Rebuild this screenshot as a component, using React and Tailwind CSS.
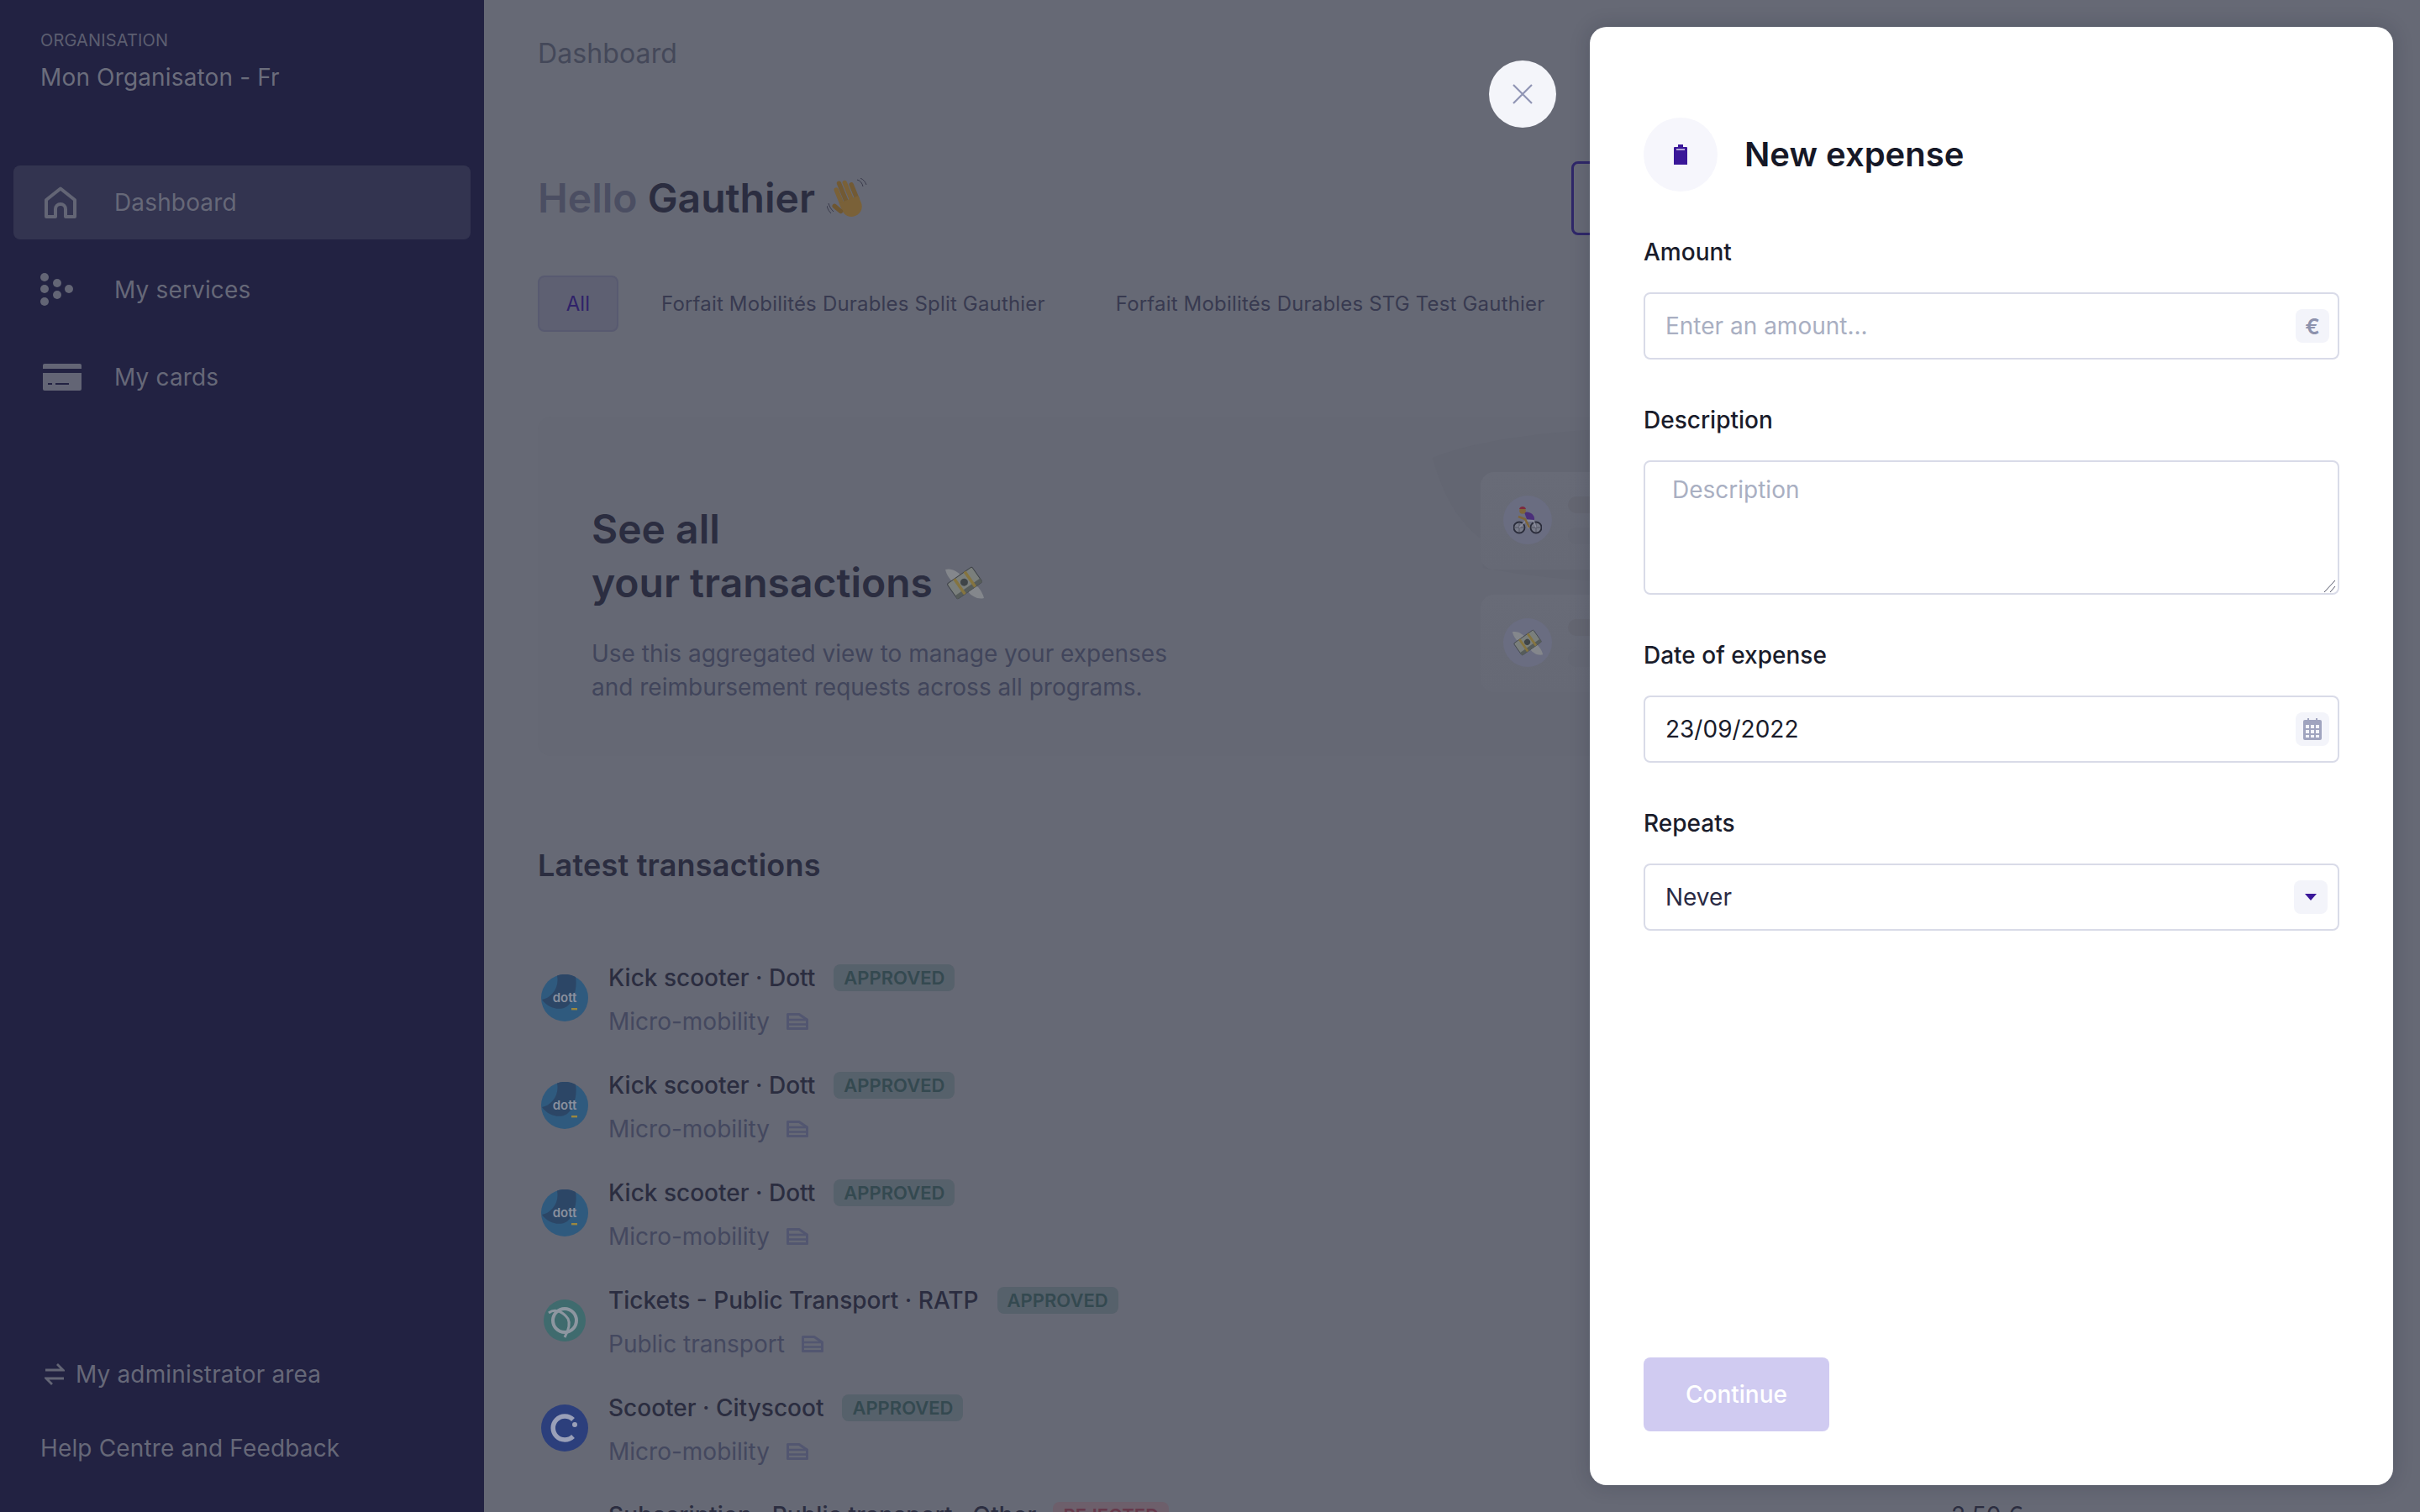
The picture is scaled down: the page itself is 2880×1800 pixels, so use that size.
import React from "react";

const Home = () => (
  <svg width="38" height="38" viewBox="0 0 38 38" fill="none" stroke="#636575" strokeWidth="4" strokeLinejoin="round">
    <path d="M19 2.5 L36 16 V36 H25 V27 a6 6 0 0 0 -12 0 V36 H2 V16 Z" />
  </svg>
);
const Dots = () => (
  <svg width="40" height="40" viewBox="0 0 40 40" fill="#636575">
    <circle cx="5" cy="5" r="5" /><circle cx="5" cy="19" r="5" /><circle cx="5" cy="34" r="5" />
    <circle cx="20" cy="12" r="5" /><circle cx="20" cy="26" r="5" /><circle cx="34" cy="19" r="5" />
  </svg>
);
const CardIcon = () => (
  <svg width="46" height="32" viewBox="0 0 46 32">
    <path d="M2 0 H44 a2 2 0 0 1 2 2 V6 H0 V2 a2 2 0 0 1 2 -2 Z" fill="#636575" />
    <path d="M0 11 H46 V30 a2 2 0 0 1 -2 2 H2 a2 2 0 0 1 -2 -2 Z" fill="#636575" />
    <rect x="6" y="23" width="5" height="2" fill="#222242" /><rect x="15" y="23" width="16" height="2" fill="#222242" />
  </svg>
);
const Swap = () => (
  <svg width="24" height="26" viewBox="0 0 24 26" fill="none" stroke="#636575" strokeWidth="2.8">
    <path d="M1 8 H21 M15 1 L22 8 L15 8" /><path d="M23 18 H3 M9 25 L2 18 L9 18" />
  </svg>
);
const Doc = () => (
  <svg width="26" height="20" viewBox="0 0 26 20" fill="none" stroke="#525670" strokeWidth="3" strokeLinejoin="round">
    <path d="M1.5 1.5 H15 L24.5 8 V18.5 H1.5 Z" /><path d="M1.5 8 H24.5 M1.5 13.5 H24.5" strokeWidth="2.4" />
  </svg>
);
const Wave = () => (
  <svg width="50" height="48" viewBox="0 0 50 48">
    <g transform="rotate(-22 25 26)">
      <rect x="14" y="7" width="5.4" height="26" rx="2.7" fill="#7a6138" />
      <rect x="20" y="1" width="5.4" height="30" rx="2.7" fill="#725a34" />
      <rect x="26.5" y="3" width="5.4" height="28" rx="2.7" fill="#7a6138" />
      <rect x="33" y="8" width="5.4" height="24" rx="2.7" fill="#725a34" />
      <path d="M14 26 H38.4 V35 C38.4 42 33 47 26 47 C19 47 14 41 14 35 Z" fill="#7a6138" />
      <rect x="7" y="24" width="5.4" height="15" rx="2.7" transform="rotate(-28 9 31)" fill="#6e5631" />
    </g>
    <path d="M36 2 C40 3 42 6 43 10 M40 0 C44 2 46 5 47 8 M2 30 C3 34 5 37 8 40 M0 33 C1 37 3 40 5 42" fill="none" stroke="#3a3b4c" strokeWidth="1" />
  </svg>
);
const Money = ({ size = 48 }) => (
  <svg width={size} height={size} viewBox="0 0 48 48">
    <path d="M1 8 C8 6 16 10 20 16 L14 26 C8 22 3 16 1 8 Z" fill="#84878c" />
    <path d="M47 42 C40 44 32 40 28 34 L34 24 C40 28 45 34 47 42 Z" fill="#84878c" />
    <g transform="rotate(-35 24 24)">
      <rect x="6" y="13" width="36" height="22" rx="2" fill="#7a7f7c" stroke="#3e4248" strokeWidth="1" />
      <rect x="6" y="30" width="36" height="5" fill="#565c5a" />
      <rect x="15" y="13" width="3.5" height="22" fill="#85743f" /><rect x="30" y="13" width="3.5" height="22" fill="#85743f" />
      <circle cx="24" cy="23" r="4.5" fill="#3f4548" />
    </g>
  </svg>
);
const Bike = () => (
  <svg width="34" height="34" viewBox="0 0 34 34" fill="none">
    <circle cx="7" cy="26" r="6.5" stroke="#2a2c3a" strokeWidth="1.8" fill="#777a88" />
    <circle cx="27" cy="26" r="6.5" stroke="#2a2c3a" strokeWidth="1.8" fill="#777a88" />
    <path d="M7 20 V32 M1 26 H13 M27 20 V32 M21 26 H33" stroke="#4a4c5a" strokeWidth="0.8" />
    <path d="M7 26 L15 18 L24 18 L27 26 M15 18 L18 27" stroke="#8d8f9f" strokeWidth="1.4" />
    <path d="M6 13 L14 16 L19 26" stroke="#7f6539" strokeWidth="2.6" />
    <path d="M13 8 C18 6 26 10 25 17 L16 16 Z" fill="#4b2f7a" />
    <circle cx="11" cy="6" r="3.8" fill="#7f6539" /><path d="M7 4 C8 0 14 0 15 4 Z" fill="#7d2a3e" />
  </svg>
);
const Dott = () => (
  <svg width="56" height="56" viewBox="0 0 56 56">
    <circle cx="28" cy="28" r="28" fill="#2f5a7e" />
    <path d="M19 1.5 A28 28 0 0 1 41 3 C43 14 40 30 31 38 C22 44 8 40 1 30 C12 28 22 16 19 1.5 Z" fill="#2c4666" />
    <text x="28" y="33" textAnchor="middle" fontSize="15" fontWeight="600" fill="#8a909e" fontFamily="Inter, sans-serif">dott</text>
    <rect x="36" y="40" width="7" height="2.4" fill="#9a8740" />
  </svg>
);
const Ratp = () => (
  <svg width="56" height="56" viewBox="0 0 56 56">
    <circle cx="28" cy="28" r="25" fill="#3f6b6e" />
    <circle cx="28" cy="28" r="14" fill="none" stroke="#8d96a0" strokeWidth="4" />
    <path d="M9 19 C18 12 28 20 32 26 C36 34 30 44 28 48" fill="none" stroke="#8d96a0" strokeWidth="3" />
  </svg>
);
const Cityscoot = () => (
  <svg width="56" height="56" viewBox="0 0 56 56">
    <circle cx="28" cy="28" r="28" fill="#2c3f7c" />
    <path d="M38 18 A14 14 0 1 0 38 38" fill="none" stroke="#9aa0b8" strokeWidth="5.5" />
    <circle cx="40" cy="24" r="3" fill="#9aa0b8" />
  </svg>
);
const Clipboard = () => (
  <svg width="18" height="24" viewBox="0 0 18 24" fill="#3a1799">
    <path d="M6 0 H12 V3 H16 a1 1 0 0 1 1 1 V24 H1 V4 a1 1 0 0 1 1 -1 H6 Z" />
    <path d="M4 6 H14" stroke="#ffffff" strokeWidth="1.2" />
  </svg>
);
const Calendar = () => (
  <svg width="22" height="26" viewBox="0 0 22 26" fill="#a0a4bf">
    <path d="M2 2 H5 V0 H7 V2 H15 V0 H17 V2 H20 a2 2 0 0 1 2 2 V24 a2 2 0 0 1 -2 2 H2 a2 2 0 0 1 -2 -2 V4 a2 2 0 0 1 2 -2 Z" />
    <g fill="#f3f4fa">
      <rect x="3" y="8" width="4" height="4" /><rect x="9" y="8" width="4" height="4" /><rect x="15" y="8" width="4" height="4" />
      <rect x="3" y="14" width="4" height="4" /><rect x="9" y="14" width="4" height="4" /><rect x="15" y="14" width="4" height="4" />
      <rect x="3" y="20" width="4" height="3" /><rect x="9" y="20" width="4" height="3" /><rect x="15" y="20" width="4" height="3" />
    </g>
  </svg>
);

const rows = [
  { title: "Kick scooter · Dott", sub: "Micro-mobility", logo: <Dott /> },
  { title: "Kick scooter · Dott", sub: "Micro-mobility", logo: <Dott /> },
  { title: "Kick scooter · Dott", sub: "Micro-mobility", logo: <Dott /> },
  { title: "Tickets - Public Transport · RATP", sub: "Public transport", logo: <Ratp /> },
  { title: "Scooter · Cityscoot", sub: "Micro-mobility", logo: <Cityscoot /> },
];

const Badge = ({ children, danger }) => (
  <span className={danger
    ? "flex h-[32px] items-center rounded-[8px] bg-[#6d5f6b] px-[12px] text-[22px] font-semibold text-[#65384a]"
    : "flex h-[32px] items-center rounded-[8px] bg-[#56616b] px-[12px] text-[22px] font-semibold text-[#344950]"}>
    {children}
  </span>
);

const Row = ({ title, sub, logo }) => (
  <div className="flex h-[128px] items-center gap-[24px] pl-[4px]">
    <div className="mb-[4px] shrink-0">{logo}</div>
    <div className="flex flex-col gap-[12px]">
      <div className="flex h-[40px] items-center gap-[22px]">
        <span className="text-[28px] font-medium leading-[40px] text-[#2b2d40]">{title}</span>
        <Badge>APPROVED</Badge>
      </div>
      <div className="flex h-[40px] items-center gap-[20px]">
        <span className="text-[28px] leading-[40px] text-[#44485f]">{sub}</span>
        <Doc />
      </div>
    </div>
  </div>
);

const MiniCard = ({ children }) => (
  <div className="flex h-[116px] w-[640px] gap-[19px] rounded-[16px] bg-linear-to-b from-[#686b77] to-[#666975] pl-[27px] pt-[28px]">
    <div className="flex h-[58px] w-[58px] items-center justify-center rounded-full bg-[#6a6d81]">{children}</div>
    <div className="flex flex-col gap-[17px] pt-[1px]">
      <div className="h-[20px] w-[300px] rounded-[10px] bg-[#646671]" />
      <div className="h-[20px] w-[300px] rounded-[10px] bg-[#656874]" />
    </div>
  </div>
);

const Field = ({ label, children }) => (
  <div className="flex flex-col gap-[28px]">
    <label className="text-[28px] font-medium leading-[40px] text-[#1a1c2b]">{label}</label>
    {children}
  </div>
);

const fieldBox = "relative flex h-[80px] w-full items-center rounded-[8px] border-2 border-[#d9dbe8] bg-white pl-[24px]";
const sideBox = "absolute right-[10px] top-[18px] flex h-[40px] w-[40px] items-center justify-center rounded-[8px] bg-[#f3f4fa]";

export default function App() {
  return (
    <div className="relative flex h-screen w-full overflow-hidden bg-[#666975] font-['Inter',sans-serif]">
      <aside className="flex h-full w-[576px] shrink-0 flex-col bg-[#222242] px-[16px] tracking-[0.15px]">
        <div className="flex flex-col pl-[32px] pt-[35px]">
          <span className="text-[20px] leading-[26px] text-[#5c5e70]">ORGANISATION</span>
          <span className="mt-[11px] text-[28px] leading-[40px] text-[#6b6d7c]">Mon Organisaton - Fr</span>
        </div>
        <nav className="mt-[85px] flex flex-col gap-[16px]">
          <div className="flex h-[88px] items-center rounded-[8px] bg-[#333450] pl-[37px]">
            <span className="w-[83px]"><Home /></span>
            <span className="text-[28px] text-[#666878]">Dashboard</span>
          </div>
          <div className="flex h-[88px] items-center pl-[32px]">
            <span className="w-[88px]"><Dots /></span>
            <span className="text-[28px] text-[#666878]">My services</span>
          </div>
          <div className="flex h-[88px] items-center pl-[35px]">
            <span className="w-[85px]"><CardIcon /></span>
            <span className="text-[28px] text-[#666878]">My cards</span>
          </div>
        </nav>
        <div className="mt-auto flex flex-col pb-[56px] pl-[32px]">
          <div className="flex h-[40px] items-center gap-[13px] pl-[5px]">
            <Swap />
            <span className="text-[28px] leading-[40px] text-[#666878]">My administrator area</span>
          </div>
          <span className="mt-[48px] text-[28px] leading-[40px] text-[#666878]">Help Centre and Feedback</span>
        </div>
      </aside>

      <main className="flex w-[1830px] shrink-0 flex-col pl-[64px] pt-[44px]">
        <h2 className="text-[32px] leading-[40px] tracking-[0.1px] text-[#444859]">Dashboard</h2>
        <div className="mt-[108px] flex h-[88px] items-center justify-between">
          <h1 className="flex items-center gap-[14px] text-[48px] font-semibold leading-[64px] text-[#2b2d40]">
            <span><span className="text-[#4b4e62]">Hello</span> Gauthier</span>
            <Wave />
          </h1>
          <div className="mr-[136px] h-[88px] w-[400px] rounded-[8px] border-[3px] border-[#2f2769]" />
        </div>
        <div className="mt-[48px] flex h-[67px] items-center tracking-[0.18px]">
          <div className="flex h-[67px] w-[96px] items-center justify-center rounded-[8px] border-2 border-[#585a70] bg-[#5e6072] text-[24px] text-[#2f2269]">All</div>
          <span className="ml-[51px] text-[24px] text-[#383a50]">Forfait Mobilités Durables Split Gauthier</span>
          <span className="ml-[84px] whitespace-nowrap text-[24px] text-[#383a50]">Forfait Mobilités Durables STG Test Gauthier</span>
        </div>
        <section className="relative mt-[101px] flex h-[404px] w-[1766px] shrink-0 rounded-[16px] bg-[#656874]">
          <svg className="absolute left-0 top-0" width="1766" height="404" viewBox="0 0 1766 404">
            <path d="M1065 49 C1110 30 1200 16 1300 14 V196 C1230 196 1180 190 1125 180 L1122 145 C1090 120 1075 85 1065 49 Z" fill="#636672" />
          </svg>
          <div className="relative w-[1122px] shrink-0 pl-[64px] pt-[102px]">
            <h3 className="text-[48px] font-semibold leading-[64px] text-[#2b2d40]">See all</h3>
            <h3 className="flex items-center gap-[14px] text-[48px] font-semibold leading-[64px] text-[#2b2d40]">
              your transactions <Money />
            </h3>
            <p className="mt-[32px] text-[28px] leading-[40px] text-[#41455b]">
              Use this aggregated view to manage your expenses<br />and reimbursement requests across all programs.
            </p>
          </div>
          <div className="relative flex flex-col gap-[30px] pt-[66px]">
            <MiniCard><Bike /></MiniCard>
            <MiniCard><Money size={38} /></MiniCard>
          </div>
        </section>
        <h2 className="mt-[110px] text-[36px] font-semibold leading-[40px] tracking-[0.2px] text-[#2b2d40]">Latest transactions</h2>
        <div className="mt-[76px] flex w-[1768px] flex-col">
          {rows.map((r, i) => <Row key={i} {...r} />)}
          <div className="flex h-[128px] items-start gap-[24px] pl-[4px] pt-[18px]">
            <div className="h-[56px] w-[56px] shrink-0" />
            <div className="flex h-[40px] flex-1 items-center gap-[20px]">
              <span className="text-[28px] font-medium leading-[40px] tracking-[0.13px] text-[#2b2d40]">Subscription · Public transport · Other</span>
              <Badge danger>REJECTED</Badge>
              <span className="ml-auto text-[28px] leading-[40px] text-[#2b2d40]">2,50 €</span>
            </div>
          </div>
        </div>
      </main>

      <button className="absolute left-[1772px] top-[72px] flex h-[80px] w-[80px] items-center justify-center rounded-full bg-[#f4f5fa]">
        <svg width="24" height="24" viewBox="0 0 24 24" fill="none" stroke="#9095b4" strokeWidth="2.2"><path d="M1 1 L23 23 M23 1 L1 23" /></svg>
      </button>

      <div className="absolute bottom-[32px] right-[32px] top-[32px] flex w-[956px] flex-col rounded-[20px] bg-white px-[64px] pb-[64px] pt-[108px] shadow-[0_0_24px_rgba(20,25,44,0.2)]">
        <div className="flex items-center gap-[32px]">
          <div className="flex h-[88px] w-[88px] items-center justify-center rounded-full bg-[#f6f6fc]"><Clipboard /></div>
          <h2 className="text-[40px] font-semibold leading-[48px] text-[#161827]">New expense</h2>
        </div>
        <div className="mt-[52px] flex flex-col gap-[52px]">
          <Field label="Amount">
            <div className={fieldBox}>
              <input readOnly placeholder="Enter an amount..." className="w-[680px] bg-transparent text-[28px] text-[#1a1c2b] outline-none placeholder:text-[#a9afc2]" />
              <div className={sideBox}><span className="text-[26px] font-semibold text-[#8d92ad]">€</span></div>
            </div>
          </Field>
          <Field label="Description">
            <div className="relative h-[160px]">
              <textarea readOnly placeholder="Description" className="block h-[160px] w-full resize-none rounded-[8px] border-2 border-[#d9dbe8] px-[32px] py-[16px] text-[28px] leading-[34px] text-[#1a1c2b] outline-none placeholder:text-[#a9afc2]" />
              <svg className="absolute bottom-[3px] right-[4px]" width="15" height="15" viewBox="0 0 15 15" fill="none" stroke="#55586a" strokeWidth="1">
                <path d="M1 15 L14 1 M8 15 L14 8" />
              </svg>
            </div>
          </Field>
          <Field label="Date of expense">
            <div className={fieldBox}>
              <span className="text-[28px] text-[#1a1c2b]">23/09/2022</span>
              <div className={sideBox}><Calendar /></div>
            </div>
          </Field>
          <Field label="Repeats">
            <div className={fieldBox}>
              <span className="text-[28px] text-[#2a2b45]">Never</span>
              <div className="absolute right-[12px] top-[18px] flex h-[40px] w-[40px] items-center justify-center rounded-[8px] bg-[#f3f4fa]">
                <svg width="14" height="8" viewBox="0 0 14 8" fill="#3a1799"><path d="M0 0 H14 L7 8 Z" /></svg>
              </div>
            </div>
          </Field>
        </div>
        <button className="mt-auto h-[88px] w-[221px] rounded-[8px] bg-[#d0cbf1] text-[28px] font-medium text-white">Continue</button>
      </div>
    </div>
  );
}
